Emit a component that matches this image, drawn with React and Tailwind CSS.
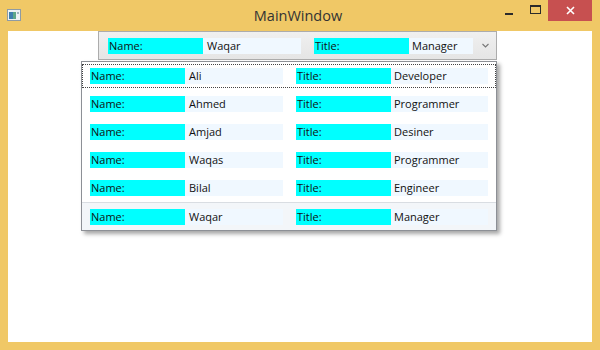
import React from 'react';

const people = [
  { name: 'Ali', title: 'Developer' },
  { name: 'Ahmed', title: 'Programmer' },
  { name: 'Amjad', title: 'Desiner' },
  { name: 'Waqas', title: 'Programmer' },
  { name: 'Bilal', title: 'Engineer' },
  { name: 'Waqar', title: 'Manager' },
];

const font = { fontFamily: '"Open Sans", "Noto Sans", sans-serif' };

// One data template row: Name label, value, Title label, value
const PersonRow = ({ person, lastWidth = 'w-[97px]' }) => (
  <div className="flex items-center h-[16px] text-[11px] leading-[16px] text-[#111]">
    <span className="w-[95px] h-full bg-[#00ffff] pl-[1px]">Name:</span>
    <span className="w-[98px] h-full bg-[#f0f8ff] pl-[4px]">{person.name}</span>
    <span className="w-[95px] h-full bg-[#00ffff] pl-[1px] ml-[13px]">Title:</span>
    <span className={`${lastWidth} h-full bg-[#f0f8ff] pl-[3px] overflow-hidden whitespace-nowrap`}>{person.title}</span>
  </div>
);

const WindowIcon = () => (
  <svg width="14" height="12" viewBox="0 0 14 12">
    <rect x="0.5" y="0.5" width="13" height="11" fill="#eef2f4" stroke="#8f9ba3" />
    <rect x="2" y="3" width="4" height="7" fill="#3f7fae" />
    <rect x="6" y="3" width="3" height="7" fill="#5fa88a" />
    <rect x="10" y="3" width="2" height="2" fill="#9fb3c0" />
  </svg>
);

const App = () => {
  return (
    <div className="w-[600px] h-[350px] bg-[#f0c866] flex flex-col" style={font}>
      {/* Title bar */}
      <div className="h-[31px] grid grid-cols-[1fr_auto_1fr] shrink-0">
        <div className="pl-[7px] pt-[9px]">
          <WindowIcon />
        </div>
        <div className="text-[14.5px] text-[#333] pt-[5px] pr-[4px]">MainWindow</div>
        <div className="flex justify-end items-start pr-[8px]">
          <div className="w-[27px] h-[21px] flex items-center justify-center">
            <div className="w-[8px] h-[2px] bg-[#2b2b2b] mt-[6px]" />
          </div>
          <div className="w-[26px] h-[21px] flex items-center justify-center">
            <div className="w-[11px] h-[9px] border border-[#2b2b2b] border-t-2 -mt-[3px]" />
          </div>
          <div className="w-[44px] h-[21px] bg-[#c75050] flex items-center justify-center">
            <svg width="9" height="9" viewBox="0 0 9 9">
              <path d="M1 1 L8 8 M8 1 L1 8" stroke="#fff" strokeWidth="1.6" />
            </svg>
          </div>
        </div>
      </div>

      {/* Client area */}
      <div className="flex-1 mx-[8px] mb-[8px] bg-white relative">
        {/* ComboBox */}
        <div className="ml-[90px] w-[399px] h-[29px] border border-[#acacac] bg-gradient-to-b from-[#f0f0f0] to-[#e5e5e5] flex items-center">
          <div className="pl-[9px]">
            <PersonRow person={people[5]} lastWidth="w-[64px]" />
          </div>
          <div className="flex-1 flex justify-center pl-[2px]">
            <svg width="7" height="5" viewBox="0 0 7 5">
              <path d="M0.5 1 L3.5 4 L6.5 1" fill="none" stroke="#777" strokeWidth="1.1" />
            </svg>
          </div>
        </div>

        {/* Dropdown popup */}
        <div className="absolute left-[73px] top-[30px] w-[416px] border border-[#8d9096] bg-white shadow-[3px_3px_4px_rgba(0,0,0,0.35)]">
          {people.map((p, i) => (
            <div
              key={i}
              className={
                i === 5
                  ? 'h-[28px] py-[2px] bg-[#f3f6f9] border-t border-[#d9dde2]'
                  : 'h-[28px] py-[2px]'
              }
            >
              <div
                className={
                  i === 0
                    ? 'h-full flex items-center pl-[7px] border border-dotted border-[#444]'
                    : 'h-full flex items-center pl-[7px] border border-transparent'
                }
              >
                <PersonRow person={p} />
              </div>
            </div>
          ))}
        </div>
      </div>
    </div>
  );
};

export default App;
